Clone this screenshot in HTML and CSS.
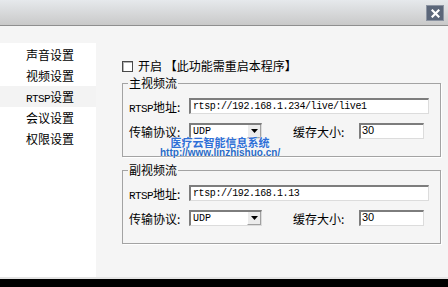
FILE: index.html
```html
<!DOCTYPE html>
<html lang="zh">
<head>
<meta charset="utf-8">
<link rel="stylesheet" href="styles.css">
</head>
<body>
<div class="window">
  <div class="titlebar">
    <div class="close">
      <svg width="9" height="9" viewBox="0 0 9 9"><path d="M1.5 1.5 L7.5 7.5 M7.5 1.5 L1.5 7.5" stroke="#fff" stroke-width="2.2" stroke-linecap="square"/></svg>
    </div>
  </div>
  <div class="body">
    <ul class="nav">
      <li>声音设置</li>
      <li>视频设置</li>
      <li class="active"><span class="lat">RTSP</span>设置</li>
      <li>会议设置</li>
      <li>权限设置</li>
    </ul>
    <div class="main">
      <div class="check"><span class="box"></span><span class="check-text">开启 【此功能需重启本程序】</span></div>
      <fieldset class="group">
        <legend>主视频流</legend>
        <div class="row">
          <span class="lbl"><span class="lat">RTSP</span>地址:</span>
          <div class="field url">rtsp://192.168.1.234/live/live1</div>
        </div>
        <div class="row">
          <span class="lbl">传输协议:</span>
          <div class="select"><span class="val">UDP</span><span class="btn"><svg width="7" height="4" viewBox="0 0 7 4"><path d="M0 0 H7 L3.5 4 Z" fill="#000"/></svg></span></div>
          <span class="lbl2">缓存大小:</span>
          <div class="field num">30</div>
        </div>
      </fieldset>
      <fieldset class="group second">
        <legend>副视频流</legend>
        <div class="row">
          <span class="lbl"><span class="lat">RTSP</span>地址:</span>
          <div class="field url">rtsp://192.168.1.13</div>
        </div>
        <div class="row">
          <span class="lbl">传输协议:</span>
          <div class="select"><span class="val">UDP</span><span class="btn"><svg width="7" height="4" viewBox="0 0 7 4"><path d="M0 0 H7 L3.5 4 Z" fill="#000"/></svg></span></div>
          <span class="lbl2">缓存大小:</span>
          <div class="field num">30</div>
        </div>
      </fieldset>
      <div class="watermark">
        <div class="wm1">医疗云智能信息系统</div>
        <div class="wm2">http://www.linzhishuo.cn/</div>
      </div>
    </div>
  </div>
  <div class="footer-line"></div>
  <div class="footer"></div>
</div>
</body>
</html>
```
FILE: styles.css
```css
* { box-sizing: border-box; }
html, body { margin: 0; padding: 0; }
body {
  width: 448px;
  height: 287px;
  overflow: hidden;
  background: #000;
  font-family: "Noto Sans CJK SC", "Liberation Sans", sans-serif;
  font-size: 12px;
  color: #000;
}
.window {
  width: 448px;
  height: 287px;
  display: flex;
  flex-direction: column;
}
.titlebar {
  height: 26px;
  flex: none;
  background: linear-gradient(#e6e9ec, #c9c9c9);
  border-bottom: 1px solid #8f8f8f;
  display: flex;
  justify-content: flex-end;
  align-items: flex-start;
  padding: 5px 4px 0 0;
}
.close {
  width: 18px;
  height: 16px;
  background: #5b6679;
  border: 1px solid #8c94a2;
  display: flex;
  align-items: center;
  justify-content: center;
}
.close svg { display: block; }
.body {
  height: 251px;
  flex: none;
  display: flex;
  background: #f5f5f5;
}
.footer-line { height: 2px; flex: none; background: #e4e4e4; }
.footer { flex: 1; background: #000; }
.nav {
  list-style: none;
  margin: 17px 0 0;
  padding: 1px 0 0;
  width: 96px;
  flex: none;
  background: #fff;
}
.nav li {
  height: 21px;
  line-height: 21px;
  padding-left: 26px;
  white-space: nowrap;
}
.nav li.active { background: #f3f3f3; }
.lat {
  font-family: "Liberation Mono", monospace;
  font-size: 11px;
  letter-spacing: -0.6px;
}
.main {
  position: relative;
  flex: 1;
  padding: 34px 7px 0 26px;
}
.check {
  display: flex;
  align-items: center;
  height: 12px;
}
.box {
  width: 11px;
  height: 11px;
  background: #fff;
  border: 1px solid #4a4a4a;
  box-shadow: inset 1px 1px #b5b5b5;
  flex: none;
}
.check-text {
  margin-left: 5px;
  line-height: 12px;
  white-space: nowrap;
}
.group {
  margin: 4px 0 0;
  padding: 8px 10px 17px 6px;
  border: 1px solid #a3a3a3;
  box-shadow: 1px 1px #fff;
  min-width: 0;
}
.group.second { margin-top: 6px; }
.group legend {
  padding: 0 1px;
  margin-left: -1px;
  line-height: 14px;
  font-size: 12px;
}
.row {
  display: flex;
  align-items: center;
  height: 16px;
}
.row + .row { margin-top: 9px; }
.lbl { width: 60px; flex: none; white-space: nowrap; }
.lbl2 { width: 66px; margin-left: 31px; flex: none; white-space: nowrap; }
.field {
  height: 16px;
  background: #fff;
  border-top: 2px solid #7d7d7d;
  border-left: 2px solid #7d7d7d;
  border-right: 1px solid #dcdcdc;
  border-bottom: 1px solid #dcdcdc;
  white-space: nowrap;
  overflow: hidden;
}
.url {
  width: 240px;
  padding-left: 2px;
  font-family: "Liberation Mono", monospace;
  font-size: 10px;
  letter-spacing: -0.4px;
  line-height: 13px;
}
.num {
  width: 65px;
  padding-left: 1px;
  font-family: "Liberation Sans", Arial, sans-serif;
  font-size: 11px;
  line-height: 11px;
}
.select {
  width: 73px;
  height: 16px;
  display: flex;
  background: #fff;
  border-top: 2px solid #7d7d7d;
  border-left: 2px solid #7d7d7d;
  border-right: 1px solid #dcdcdc;
  border-bottom: 1px solid #dcdcdc;
}
.select .val {
  flex: 1;
  padding-left: 2px;
  font-family: "Liberation Mono", monospace;
  font-size: 10px;
  line-height: 13px;
}
.select .btn {
  width: 14px;
  background: #ececec;
  border-left: 1px solid #fff;
  border-right: 1px solid #a0a0a0;
  border-bottom: 1px solid #a0a0a0;
  display: flex;
  align-items: center;
  justify-content: center;
}
.select .btn svg { display: block; }
.watermark {
  position: absolute;
  left: 64px;
  top: 110px;
  width: 120px;
  text-align: center;
  color: #2f6fd6;
  font-weight: bold;
  text-shadow: 0 0 2px #fff, 0 0 1px #fff;
  white-space: nowrap;
}
.wm1 { font-size: 11px; line-height: 12px; }
.wm2 {
  font-family: "Liberation Sans", Arial, sans-serif;
  font-size: 10px;
  line-height: 10px;
  color: #2a6bc6;
}
```
